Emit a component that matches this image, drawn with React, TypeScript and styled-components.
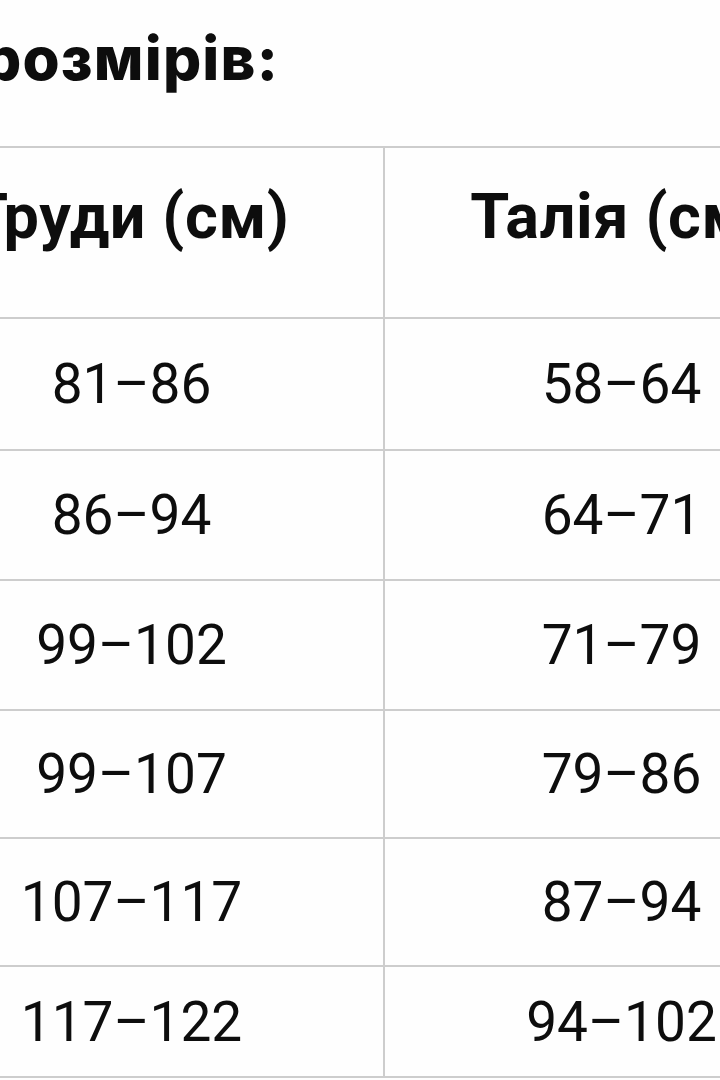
import React from 'react'
import styled, { createGlobalStyle } from 'styled-components'

const GlobalStyle = createGlobalStyle`
  html, body {
    margin: 0;
    padding: 0;
    background: #ffffff;
  }
`

const Page = styled.div`
  width: 720px;
  height: 1080px;
  overflow: hidden;
  background: #fefefe;
  color: #0d0d0d;
`

const Title = styled.h2`
  margin: 0 0 52px -17px;
  padding-top: 22px;
  font-family: Inter, 'Open Sans', sans-serif;
  font-weight: 800;
  font-size: 60px;
  line-height: 1.2;
  letter-spacing: 1.2px;
  white-space: nowrap;
`

const Table = styled.div`
  display: grid;
  grid-template-columns: 505px 475px;
  margin-left: -120px;
  width: 980px;
  border-top: 2px solid #cdcdcd;
`

const Cell = styled.div<{ $h: number; $head?: boolean }>`
  height: ${p => p.$h}px;
  box-sizing: border-box;
  border-right: 2px solid #cdcdcd;
  border-bottom: 2px solid #cdcdcd;
  display: flex;
  justify-content: center;
  align-items: ${p => (p.$head ? 'flex-start' : 'center')};
  padding-top: ${p => (p.$head ? '31px' : '0')};
  font-family: Roboto, 'Liberation Sans', sans-serif;
  font-weight: ${p => (p.$head ? 700 : 400)};
  font-size: ${p => (p.$head ? '63px' : '55px')};
  letter-spacing: ${p => (p.$head ? '0.6px' : '0')};
  line-height: 1.2;
  white-space: nowrap;
`

const rows = [
  { h: 132, chest: '81–86', waist: '58–64' },
  { h: 130, chest: '86–94', waist: '64–71' },
  { h: 130, chest: '99–102', waist: '71–79' },
  { h: 128, chest: '99–107', waist: '79–86' },
  { h: 128, chest: '107–117', waist: '87–94' },
  { h: 111, chest: '117–122', waist: '94–102' },
]

export default function App() {
  return (
    <>
      <GlobalStyle />
      <Page>
        <Title>розмірів:</Title>
        <Table>
          <Cell $h={171} $head>Груди (см)</Cell>
          <Cell $h={171} $head>Талія (см)</Cell>
          {rows.map((r, i) => (
            <React.Fragment key={i}>
              <Cell $h={r.h}>{r.chest}</Cell>
              <Cell $h={r.h}>{r.waist}</Cell>
            </React.Fragment>
          ))}
        </Table>
      </Page>
    </>
  )
}
